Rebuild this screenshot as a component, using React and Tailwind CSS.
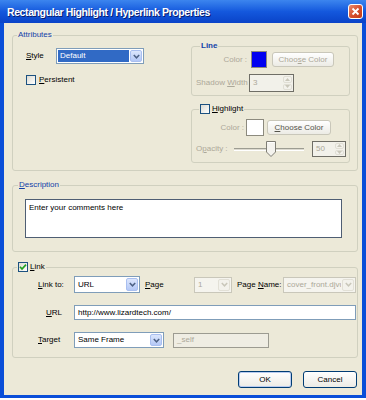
import React from 'react';

const label = 'text-black';
const grey = 'text-[#ACA899]';

function Check({ checked }) {
  return (
    <span className="inline-flex w-[10px] h-[10px] border border-[#1C5180] bg-gradient-to-br from-[#DCDBD3] to-white items-center justify-center shrink-0">
      {checked && (
        <svg width="8" height="8" viewBox="0 0 8 8">
          <path d="M1 3.8 L3 6 L7 1.6" stroke="#21A121" strokeWidth="1.7" fill="none" />
        </svg>
      )}
    </span>
  );
}

function Arrow({ disabled }) {
  return (
    <span
      className={
        disabled
          ? 'w-[12px] h-full flex items-center justify-center bg-[#F3F2EC] border border-[#E2E0D6] rounded-[2px]'
          : 'w-[12px] h-full flex items-center justify-center bg-gradient-to-b from-[#DCE6FC] to-[#B4C8F6] border border-[#A9BFF0] rounded-[2px]'
      }
    >
      <svg width="7" height="5" viewBox="0 0 7 5">
        <path d="M0.8 1 L3.5 3.8 L6.2 1" stroke={disabled ? '#C9C7BA' : '#4D6185'} strokeWidth="1.5" fill="none" />
      </svg>
    </span>
  );
}

function Select({ className, value, disabled, selected }) {
  return (
    <div
      className={`flex items-stretch h-[16px] border p-px ${
        disabled ? 'border-[#C9C7BA] bg-[#F5F4EE]' : 'border-[#7F9DB9] bg-white'
      } ${className}`}
    >
      <span
        className={`flex-1 min-w-0 flex items-center pl-[2px] mr-px overflow-hidden whitespace-nowrap ${
          selected ? 'bg-[#316AC5] text-white' : disabled ? 'text-[#ACA899]' : 'text-black'
        }`}
      >
        {value}
      </span>
      <Arrow disabled={disabled} />
    </div>
  );
}

function Spin({ className, value }) {
  return (
    <div className={`flex border border-[#6F6E66] bg-[#F2F1EA] p-px ${className}`}>
      <span className="flex-1 flex items-center pl-[2px] text-[#ACA899]">{value}</span>
      <span className="w-[9px] flex flex-col gap-px">
        <span className="flex-1 flex items-center justify-center bg-[#F3F2EC] border border-[#E0DED4] rounded-[2px]">
          <svg width="5" height="3" viewBox="0 0 5 3">
            <path d="M0 3 L2.5 0 L5 3 Z" fill="#C9C7BA" />
          </svg>
        </span>
        <span className="flex-1 flex items-center justify-center bg-[#F3F2EC] border border-[#E0DED4] rounded-[2px]">
          <svg width="5" height="3" viewBox="0 0 5 3">
            <path d="M0 0 L2.5 3 L5 0 Z" fill="#C9C7BA" />
          </svg>
        </span>
      </span>
    </div>
  );
}

function Button({ className, children, muted }) {
  return (
    <button
      className={`flex items-center justify-center rounded-[3px] border bg-gradient-to-b from-white to-[#ECEBE5] ${
        muted ? 'border-[#C9C7BA] text-[#ACA899]' : 'border-[#003C74] text-black'
      } ${className}`}
    >
      {children}
    </button>
  );
}

export default function App() {
  return (
    <div className="w-[366px] h-[400px] bg-white font-['Liberation_Sans',Arial,sans-serif] text-[8px] leading-[10px]">
      <div className="h-[398px] flex flex-col bg-[#0A4ED8]">
        {/* title bar */}
        <div className="h-[23px] flex items-center justify-between pl-[7px] pr-[3px] bg-gradient-to-b from-[#3C85EE] via-[#1458DD] to-[#0A43C8]">
          <span className="text-white font-bold text-[10.5px] tracking-[-0.4px] [text-shadow:1px_1px_0_#0A1E6E]">
            Rectangular Highlight / Hyperlink Properties
          </span>
          <span className="w-[15px] h-[15px] rounded-[3px] border border-white bg-gradient-to-br from-[#E98A6C] via-[#D7502E] to-[#C23B17] flex items-center justify-center">
            <svg width="9" height="9" viewBox="0 0 9 9">
              <path d="M1.5 1.5 L7.5 7.5 M7.5 1.5 L1.5 7.5" stroke="white" strokeWidth="1.8" />
            </svg>
          </span>
        </div>

        {/* body */}
        <div className="flex-1 mx-[4px] mb-[3px] bg-[#ECE9D8] flex flex-col pl-[8px] pr-[4px]">
          {/* Attributes */}
          <fieldset className="mt-[6px] border border-[#D0D0BF] rounded-[3px] pb-[7px]">
            <legend className="ml-[4px] px-[1px] h-[12px] leading-[12px] text-[#1241A8]">Attributes</legend>
            <div className="flex">
              <div className="flex-1 pl-[13px]">
                <div className="mt-[7px] flex items-center">
                  <span className={`w-[30px] ${label}`}>
                    <u>S</u>tyle
                  </span>
                  <Select className="w-[88px]" value="Default" selected />
                </div>
                <div className="mt-[11px] flex items-center gap-[3px]">
                  <Check />
                  <span className={label}>
                    <u>P</u>ersistent
                  </span>
                </div>
              </div>

              <div className="w-[159px] mr-[7px]">
                {/* Line */}
                <fieldset className="border border-[#D0D0BF] rounded-[3px] pb-[3px] pl-[4px]">
                  <legend className="ml-[4px] px-[1px] h-[10px] leading-[10px] font-bold text-[#1241A8]">Line</legend>
                  <div className="flex items-center h-[17px]">
                    <span className={`w-[51px] text-right ${grey}`}>Color :</span>
                    <span className="ml-[4px] w-[16px] h-[17px] bg-[#0000F0] border border-[#8C8A7E]" />
                    <Button muted className="ml-[5px] w-[62px] h-[15px]">
                      Choo<u>s</u>e Color
                    </Button>
                  </div>
                  <div className="mt-[6px] flex items-center">
                    <span className={`w-[53px] ${grey}`}>
                      Shadow <u>W</u>idth
                    </span>
                    <Spin className="w-[45px] h-[18px]" value="3" />
                  </div>
                </fieldset>

                {/* Highlight */}
                <fieldset className="mt-[8px] border border-[#D0D0BF] rounded-[3px] pb-[5px] pl-[4px]">
                  <legend className="ml-[3px] px-[1px] h-[10px] flex items-center gap-[2px] text-black">
                    <Check />
                    <span>
                      <u>H</u>ighlight
                    </span>
                  </legend>
                  <div className="mt-[5px] flex items-center h-[17px]">
                    <span className={`w-[48px] text-right ${grey}`}>Color :</span>
                    <span className="ml-[2px] w-[18px] h-[17px] bg-white border border-[#8C8A7E]" />
                    <Button muted className="ml-[3px] w-[64px] h-[15px] !text-[#55544C]">
                      <u>C</u>hoose Color
                    </Button>
                  </div>
                  <div className="mt-[5px] flex items-center h-[16px]">
                    <span className={`w-[38px] ${grey}`}>
                      O<u>p</u>acity :
                    </span>
                    <div className="relative w-[70px] h-[16px]">
                      <div className="absolute left-0 right-0 top-[7px] h-[3px] border-t border-[#9D9D92] border-b border-b-white bg-[#DCDAD0]" />
                      <svg className="absolute left-[32px] top-0" width="10" height="16" viewBox="0 0 10 16">
                        <path d="M0.5 0.5 H9.5 V11 L5 15.5 L0.5 11 Z" fill="#F4F3EE" stroke="#7E7D74" />
                        <path d="M1.5 1.5 H8.5" stroke="#FFFFFF" />
                      </svg>
                    </div>
                    <Spin className="ml-[8px] w-[34px] h-[16px]" value="50" />
                  </div>
                </fieldset>
              </div>
            </div>
          </fieldset>

          {/* Description */}
          <fieldset className="mt-[8px] border border-[#D0D0BF] rounded-[3px] pb-[13px]">
            <legend className="ml-[5px] px-[1px] h-[12px] leading-[12px] text-[#1241A8]">
              <u>D</u>escription
            </legend>
            <div className="mt-[8px] ml-[12px] w-[317px] h-[39px] bg-white border border-[#4F5E73] px-[3px] pt-[3px] text-black">
              Enter your comments here
            </div>
          </fieldset>

          {/* Link */}
          <fieldset className="mt-[9px] border border-[#D0D0BF] rounded-[3px] pb-[9px]">
            <legend className="ml-[4px] px-[1px] h-[12px] flex items-center gap-[2px] text-black">
              <Check checked />
              <span>
                <u>L</u>ink
              </span>
            </legend>
            <div className="pl-[25px]">
              <div className="mt-[3px] flex items-center">
                <span className="w-[36px]">
                  <u>L</u>ink to:
                </span>
                <Select className="w-[66px] h-[17px]" value="URL" />
                <span className="ml-[5px] w-[49px]">
                  <u>P</u>age
                </span>
                <Select className="w-[38px]" value="1" disabled />
                <span className="ml-[5px] w-[46px]">
                  Page <u>N</u>ame:
                </span>
                <Select className="w-[73px]" value="cover_front.djvu" disabled />
              </div>
              <div className="mt-[12px] flex items-center">
                <span className="w-[36px] pl-[8px]">
                  <u>U</u>RL
                </span>
                <div className="w-[282px] h-[15px] bg-white border border-[#7F9DB9] flex items-center pl-[3px]">
                  http://www.lizardtech.com/
                </div>
              </div>
              <div className="mt-[12px] flex items-center">
                <span className="w-[36px]">
                  <u>T</u>arget
                </span>
                <Select className="w-[90px]" value="Same Frame" />
                <div className="ml-[9px] w-[96px] h-[15px] bg-[#EFEDE3] border border-[#9C9B91] flex items-center pl-[3px] text-[#ACA899]">
                  _self
                </div>
              </div>
            </div>
          </fieldset>

          {/* buttons */}
          <div className="mt-[13px] flex justify-end gap-[11px] pr-px">
            <Button className="w-[54px] h-[17px] border-[#1F2F55] shadow-[inset_0_0_0_1px_#B9CCF0]">OK</Button>
            <Button className="w-[54px] h-[17px] border-[#1F2F55]">Cancel</Button>
          </div>
        </div>
      </div>
    </div>
  );
}
